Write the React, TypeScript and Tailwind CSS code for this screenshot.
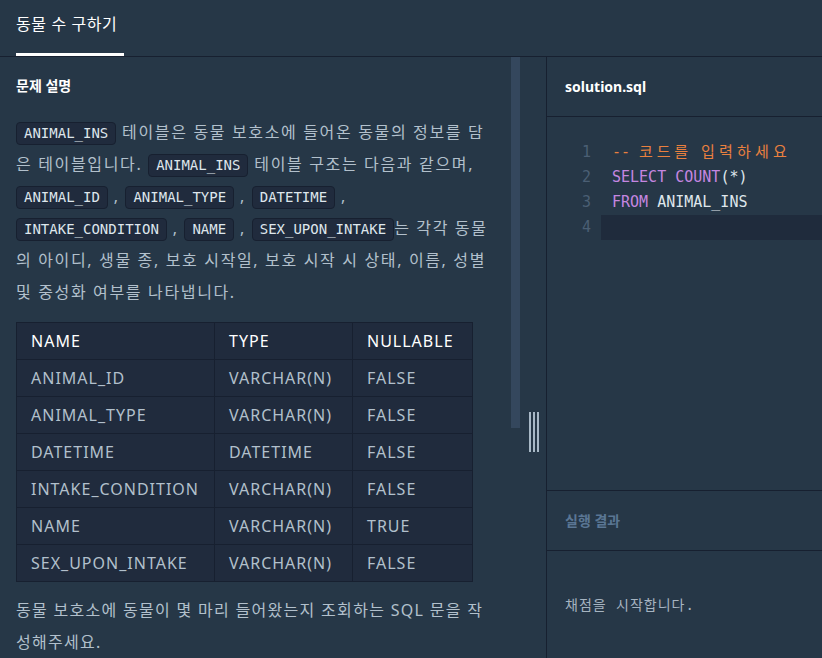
const KO = "font-['Noto_Sans','Noto_Sans_CJK_KR',sans-serif]";
const MONO = "font-['DejaVu_Sans_Mono','Noto_Sans_CJK_KR',monospace]";

const COLUMNS = [
  { name: "ANIMAL_ID", type: "VARCHAR(N)", nullable: "FALSE" },
  { name: "ANIMAL_TYPE", type: "VARCHAR(N)", nullable: "FALSE" },
  { name: "DATETIME", type: "DATETIME", nullable: "FALSE" },
  { name: "INTAKE_CONDITION", type: "VARCHAR(N)", nullable: "FALSE" },
  { name: "NAME", type: "VARCHAR(N)", nullable: "TRUE" },
  { name: "SEX_UPON_INTAKE", type: "VARCHAR(N)", nullable: "FALSE" },
];

function Code({ children }: { children: string }) {
  return (
    <code
      className={`${MONO} inline-block rounded-[4px] border border-[#172030] bg-[#202b3d] px-[7px] text-[14px] leading-[21px] tracking-normal text-[#dee6ec]`}
    >
      {children}
    </code>
  );
}

function Description() {
  return (
    <div className="flex-1 overflow-hidden px-4 pt-[19px]">
      <h3 className="text-[14px] font-bold leading-[20px] text-white">문제 설명</h3>

      <p className="mt-[20px] text-[16px] leading-[32px] tracking-[1.65px] text-[#b2c0cc]">
        <Code>ANIMAL_INS</Code> 테이블은 동물 보호소에 들어온 동물의 정보를 담은 테이블입니다.{" "}
        <Code>ANIMAL_INS</Code> 테이블 구조는 다음과 같으며, <Code>ANIMAL_ID</Code> ,{" "}
        <Code>ANIMAL_TYPE</Code> , <Code>DATETIME</Code> , <Code>INTAKE_CONDITION</Code> ,{" "}
        <Code>NAME</Code> , <Code>SEX_UPON_INTAKE</Code>는 각각 동물의 아이디, 생물 종, 보호
        시작일, 보호 시작 시 상태, 이름, 성별 및 중성화 여부를 나타냅니다.
      </p>

      {/* 테이블 구조 */}
      <table className="mt-[14px] w-[457px] border-collapse bg-[#202b3d] text-[16px] leading-[36px] tracking-[1px]">
        <thead>
          <tr className="text-white">
            <th className="w-[198px] border border-[#172030] px-[14px] text-left font-normal">NAME</th>
            <th className="w-[138px] border border-[#172030] px-[14px] text-left font-normal">TYPE</th>
            <th className="border border-[#172030] px-[14px] text-left font-normal">NULLABLE</th>
          </tr>
        </thead>
        <tbody>
          {COLUMNS.map((c) => (
            <tr key={c.name} className="text-[#b2c0cc]">
              <td className="border border-[#172030] px-[14px]">{c.name}</td>
              <td className="border border-[#172030] px-[14px]">{c.type}</td>
              <td className="border border-[#172030] px-[14px]">{c.nullable}</td>
            </tr>
          ))}
        </tbody>
      </table>

      <p className="mt-[12px] text-[16px] leading-[32px] tracking-[1.3px] text-[#b2c0cc]">
        동물 보호소에 동물이 몇 마리 들어왔는지 조회하는 SQL 문을 작<br />
        성해주세요.
      </p>
    </div>
  );
}

function Editor() {
  const lines = [
    <span className="text-[#e9803f]">
      -- <span className="tracking-[3.8px]">코드를</span>{" "}
      <span className="tracking-[4.2px]">입력하세요</span>
    </span>,
    <>
      <span className="text-[#c586e0]">SELECT COUNT</span>
      <span className="text-[#dfe6ec]">(*)</span>
    </>,
    <>
      <span className="text-[#c586e0]">FROM</span>
      <span className="text-[#dfe6ec]"> ANIMAL_INS</span>
    </>,
    <span />,
  ];

  return (
    <div className={`${MONO} flex-1 pt-[23px] text-[15px] leading-[25px]`}>
      {lines.map((l, i) => (
        <div key={i} className="flex">
          <span className="w-[44px] shrink-0 text-right text-[#4b5f74]">{i + 1}</span>
          <div className="w-[10px] shrink-0" />
          <div className={`flex-1 whitespace-pre pl-[11px] ${i === 3 ? "bg-[#1f2b3c]" : ""}`}>
            {l}
          </div>
        </div>
      ))}
    </div>
  );
}

export default function App() {
  return (
    <div className={`${KO} flex h-[658px] w-[822px] flex-col overflow-hidden bg-[#263747]`}>
      {/* 상단 탭 */}
      <div className="flex h-[57px] shrink-0 border-b border-[#172030] px-4">
        <div className="flex w-[108px] flex-col justify-between">
          <span className="pt-[13px] text-[16px] leading-[22px] tracking-[0.6px] text-white">동물 수 구하기</span>
          <div className="h-[3px] bg-white" />
        </div>
      </div>

      <div className="flex min-h-0 flex-1">
        {/* 문제 영역 */}
        <div className="flex w-[547px] shrink-0 border-r border-[#172030]">
          <Description />
          <div className="w-[10px] shrink-0 pr-px">
            <div className="h-[371px] bg-[#34475d]" />
          </div>
          <div className="flex w-[25px] shrink-0 justify-center gap-[2px] pt-[355px]">
            <div className="h-[40px] w-[2px] bg-[#a8b8c6]" />
            <div className="h-[40px] w-[2px] bg-[#a8b8c6]" />
            <div className="h-[40px] w-[2px] bg-[#a8b8c6]" />
          </div>
        </div>

        {/* 에디터 영역 */}
        <div className="flex min-w-0 flex-1 flex-col">
          <div className="flex h-[60px] shrink-0 items-center border-b border-[#172030] px-[18px]">
            <span className="text-[14px] font-bold text-white">solution.sql</span>
          </div>
          <Editor />
          <div className="flex h-[61px] shrink-0 items-center border-y border-[#172030] px-[18px]">
            <span className="text-[14px] font-bold text-[#5a7694]">실행 결과</span>
          </div>
          <div className={`${MONO} h-[107px] shrink-0 px-[18px] pt-[44px] text-[14px] tracking-[1px] text-[#a6b4c1]`}>
            채점을 시작합니다.
          </div>
        </div>
      </div>
    </div>
  );
}
